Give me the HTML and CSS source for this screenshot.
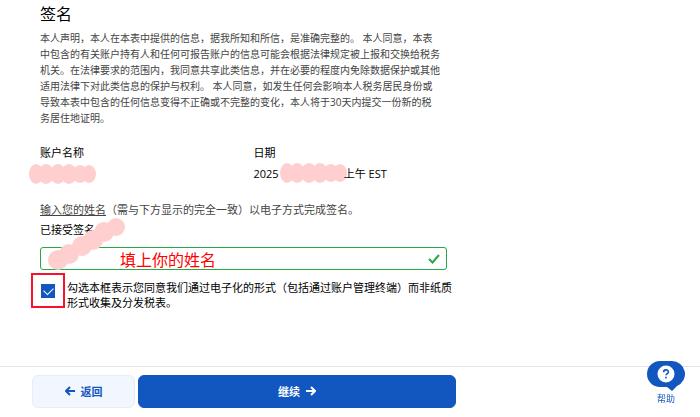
FILE: index.html
```html
<!doctype html>
<html lang="zh-CN">

<head>
<meta charset="utf-8">
<title>签名</title>
<link rel="stylesheet" href="styles.css">
</head>

<body>

<main class="content">
	<h1 class="title">签名</h1>
	<p class="statement">
		本人声明，本人在本表中提供的信息，据我所知和所信，是准确完整的。 本人同意，本表<br>
		中包含的有关账户持有人和任何可报告账户的信息可能会根据法律规定被上报和交换给税务<br>
		机关。在法律要求的范围内，我同意共享此类信息，并在必要的程度内免除数据保护或其他<br>
		适用法律下对此类信息的保护与权利。 本人同意，如发生任何会影响本人税务居民身份或<br>
		导致本表中包含的任何信息变得不正确或不完整的变化，本人将于30天内提交一份新的税<br>
		务居住地证明。
	</p>

	<dl class="details">
		<div>
			<dt>账户名称</dt>
			<dd>
				<svg class="smudge smudge-name" width="67" height="20" viewBox="0 0 67 20" aria-hidden="true">
					<ellipse cx="7" cy="10" rx="7" ry="10"/><ellipse cx="17" cy="10" rx="8" ry="10"/><ellipse cx="29" cy="10" rx="8" ry="10"/><ellipse cx="40" cy="10" rx="8" ry="10"/><ellipse cx="51" cy="10" rx="8" ry="9"/><ellipse cx="60" cy="10" rx="7" ry="9"/>
				</svg>
			</dd>
		</div>
		<div>
			<dt>日期</dt>
			<dd>
				2025
				<svg class="smudge smudge-date" width="67" height="20" viewBox="0 0 67 20" aria-hidden="true">
					<ellipse cx="7" cy="10" rx="7" ry="10"/><ellipse cx="17" cy="10" rx="8" ry="10"/><ellipse cx="29" cy="10" rx="8" ry="10"/><ellipse cx="40" cy="10" rx="8" ry="10"/><ellipse cx="51" cy="10" rx="8" ry="9"/><ellipse cx="60" cy="10" rx="7" ry="9"/>
				</svg>
				<span>上午 EST</span>
			</dd>
		</div>
	</dl>

	<p class="hint"><u>输入您的姓名</u>（需与下方显示的完全一致）以电子方式完成签名。</p>
	<div class="sign">
		<label class="sign-label" for="signature">已接受签名:</label>
		<div class="field">
			<input type="text" id="signature" class="sign-input" value="填上你的姓名">
			<svg class="valid" width="12" height="10" viewBox="0 0 12 10" aria-hidden="true"><path d="M1 5l3.5 3.5L11 1"/></svg>
		</div>
		<svg class="smudge smudge-sign" width="78" height="54" viewBox="0 0 78 54" aria-hidden="true">
			<circle cx="10" cy="43" r="10"/><circle cx="21" cy="37" r="10"/><circle cx="34" cy="29" r="10"/><circle cx="45" cy="23" r="10"/><circle cx="56" cy="15" r="10"/><circle cx="68" cy="10" r="9"/>
		</svg>
	</div>

	<div class="consent">
		<span class="marker"><input type="checkbox" id="consent" class="checkbox" checked></span>
		<label for="consent">勾选本框表示您同意我们通过电子化的形式（包括通过账户管理终端）而非纸质<br>形式收集及分发税表。</label>
	</div>
</main>

<footer class="footer">
	<button type="button" class="btn back">
		<svg width="10" height="10" viewBox="0 0 10 10" aria-hidden="true"><path d="M10 5H1M5 1L1 5l4 4"/></svg>
		返回
	</button>
	<button type="button" class="btn next">
		继续
		<svg width="10" height="10" viewBox="0 0 10 10" aria-hidden="true"><path d="M0 5h9M5 1l4 4-4 4"/></svg>
	</button>
</footer>

<a href="#" class="help">
	<svg width="38" height="30" viewBox="0 0 38 30" aria-hidden="true">
		<path class="bubble" d="M13 0h12a13 13 0 0 1 5 25L25 30l-5-4h-7A13 13 0 0 1 13 0z"/>
		<circle cx="19" cy="13" r="8.5"/>
		<path class="mark" d="M16.6 11.2c0-3 4.8-3 4.8-.3 0 1.7-2.4 1.7-2.4 3.4M19 15.8v1.6"/>
	</svg>
	帮助
</a>

</body>

</html>
```

FILE: styles.css
```css
* {
	box-sizing:border-box;
}
body {
	display:flex;
	flex-direction:column;
	min-height:100vh;
	margin:0;
	font-family:"Open Sans","Noto Sans CJK SC",sans-serif;
	font-size:11px;
	line-height:16px;
	background-color:#fff;
	color:#000;
}
.content {
	flex:1;
	width:100%;
	max-width:447px;
	padding:3px 0 0 40px;
}
.title {
	margin:0 0 5px;
	font-size:16px;
	line-height:22px;
	font-weight:normal;
}
.statement {
	margin:0 0 19px;
	font-size:10px;
	color:#444;
	white-space:nowrap;
}
.details {
	display:grid;
	grid-template-columns:1fr 1fr;
	gap:20px;
	margin:0 0 17px;
}
.details > div {
	display:flex;
	flex-direction:column;
	gap:2px;
}
.details dd {
	display:flex;
	align-items:center;
	height:22px;
	margin:0;
}
.smudge {
	fill:#ffcfcf;
}
.smudge-name {
	margin-left:-11px;
}
.smudge-date {
	margin:0 -3px 3px 1px;
}
.hint {
	margin:0 0 4px;
	color:#444;
	white-space:nowrap;
}
.sign {
	position:relative;
}
.sign-label {
	display:block;
	margin-bottom:9px;
}
.smudge-sign {
	position:absolute;
	left:8px;
	top:-5px;
}
.field {
	display:flex;
	align-items:center;
}
.sign-input {
	flex:1;
	min-width:0;
	height:23px;
	padding:0 30px 0 79px;
	border:1px solid #28a745;
	border-radius:3px;
	font-family:inherit;
	font-size:16px;
	color:#f00;
	background-color:#fff;
}
.valid {
	margin:0 7px 0 -19px;
	fill:none;
	stroke:#28a745;
	stroke-width:2;
}
.consent {
	display:flex;
	gap:2px;
	margin:3px 0 0 -9px;
	line-height:15px;
	white-space:nowrap;
}
.consent label {
	padding-top:7px;
}
.marker {
	display:flex;
	flex-shrink:0;
	align-items:center;
	justify-content:center;
	width:34px;
	height:35px;
	border:2px solid #f5122d;
}
.checkbox {
	appearance:none;
	width:14px;
	height:14px;
	margin:0;
	background:#1157bf;
}
.checkbox:checked {
	display:grid;
	place-items:center;
}
.checkbox:checked::before {
	content:"";
	width:8px;
	height:5px;
	margin-bottom:2px;
	border:solid #fff;
	border-width:0 0 1px 1px;
	transform:rotate(-45deg);
}
.footer {
	display:flex;
	gap:3px;
	max-width:100%;
	padding:8px 244px 9px 32px;
	border-top:1px solid #e3e4e6;
}
.btn {
	display:flex;
	align-items:center;
	justify-content:center;
	gap:6px;
	height:33px;
	padding:0 0 2px;
	border:1px solid #1157bf;
	border-radius:6px;
	font-family:inherit;
	font-size:11px;
	font-weight:bold;
}
.btn svg {
	fill:none;
	stroke:currentColor;
	stroke-width:2;
}
.back {
	width:103px;
	border-color:#e5edfb;
	background-color:#f2f6fe;
	color:#1157bf;
}
.next {
	flex:1;
	background-color:#1157bf;
	color:#fff;
}
.help {
	position:fixed;
	right:15px;
	bottom:11px;
	display:flex;
	flex-direction:column;
	align-items:center;
	font-size:9px;
	line-height:15px;
	color:#1157bf;
	text-decoration:none;
}
.help .bubble {
	fill:#1157bf;
}
.help circle {
	fill:#fff;
}
.help .mark {
	fill:none;
	stroke:#1157bf;
	stroke-width:1.6;
}
```
